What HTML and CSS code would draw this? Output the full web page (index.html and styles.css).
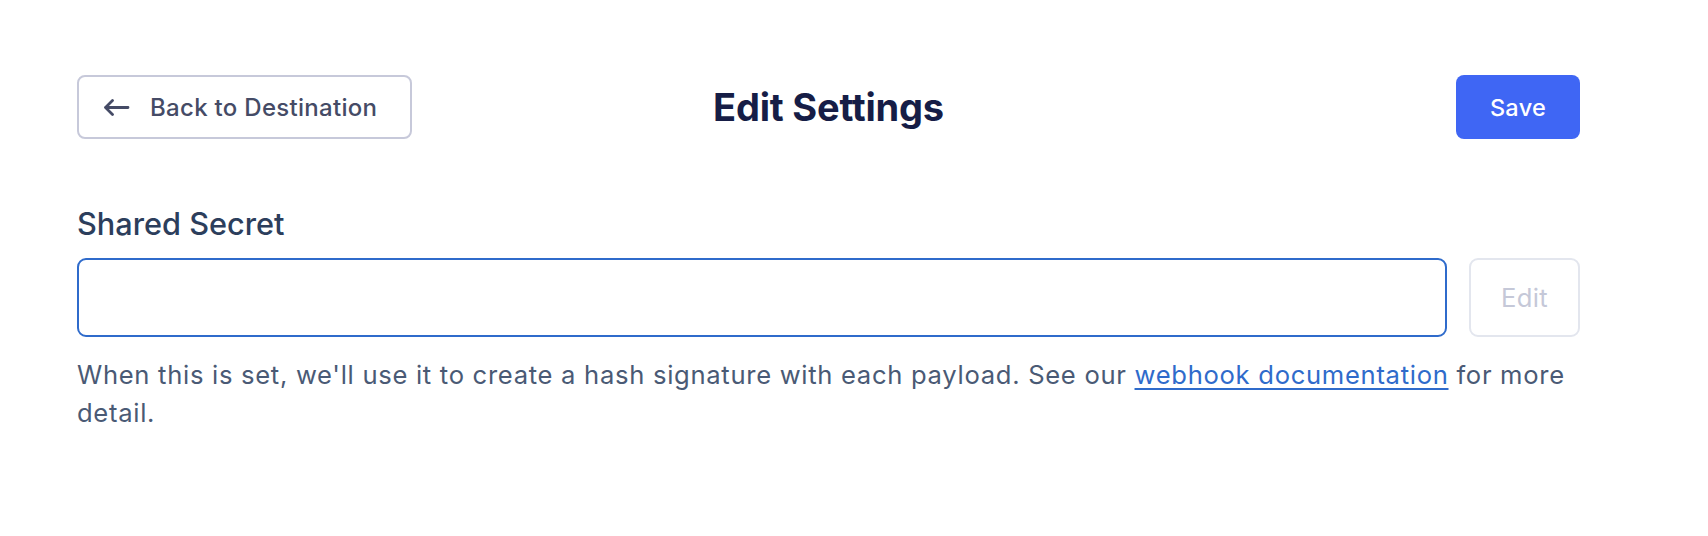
FILE: index.html
```html
<!DOCTYPE html>
<html lang="en">
<head>
<meta charset="utf-8">
<title>Edit Settings</title>
<link rel="stylesheet" href="styles.css">
</head>
<body>
<main class="page">
  <header class="topbar">
    <div class="topbar-left">
      <button class="btn btn-outline" type="button">
        <svg class="arrow" width="27" height="17" viewBox="0 0 27 17" fill="none" stroke="currentColor" stroke-width="2.8" stroke-linecap="round" stroke-linejoin="round">
          <path d="M2.5 8.5H25M9.5 1.5L2.5 8.5L9.5 15.5"/>
        </svg>
        <span>Back to Destination</span>
      </button>
    </div>
    <h1 class="title">Edit Settings</h1>
    <div class="topbar-right">
      <button class="btn btn-primary" type="button">Save</button>
    </div>
  </header>

  <section class="field">
    <label class="field-label" for="secret">Shared Secret</label>
    <div class="field-row">
      <input class="field-input" id="secret" type="text">
      <button class="btn btn-disabled" type="button">Edit</button>
    </div>
    <p class="field-help">When this is set, we'll use it to create a hash signature with each payload. See our <a href="#">webhook documentation</a> for more detail.</p>
  </section>
</main>
</body>
</html>
```

FILE: styles.css
```css
* { box-sizing: border-box; }

html, body {
  margin: 0;
  padding: 0;
  background: #ffffff;
}

body {
  font-family: Inter, "Noto Sans", "Liberation Sans", sans-serif;
  color: #4a5a75;
}

.page {
  padding: 75px 128px 0 77px;
}

.topbar {
  display: grid;
  grid-template-columns: 1fr auto 1fr;
  align-items: center;
  height: 64px;
}

.topbar-left { display: flex; justify-content: flex-start; }
.topbar-right { display: flex; justify-content: flex-end; }

.title {
  margin: 0;
  font-size: 38px;
  font-weight: 700;
  color: #161d46;
  letter-spacing: -0.2px;
}

.btn {
  font-family: inherit;
  border-radius: 8px;
  cursor: pointer;
  display: inline-flex;
  align-items: center;
  justify-content: center;
  height: 64px;
}

.btn-outline {
  background: #fff;
  border: 2px solid #c7c9da;
  color: #454b66;
  padding: 0 33px 0 24px;
  gap: 20px;
  font-size: 24px;
  letter-spacing: 0.3px;
  font-weight: 500;
}

.arrow { display: block; }

.btn-primary {
  background: #3f66f4;
  border: none;
  color: #fff;
  width: 124px;
  font-size: 23.5px;
  letter-spacing: 0.3px;
  font-weight: 500;
}

.field { margin-top: 65px; }

.field-label {
  display: block;
  font-size: 30.7px;
  font-weight: 500;
  color: #2c3e5c;
  line-height: 40px;
}

.field-row {
  display: flex;
  gap: 22px;
  margin-top: 14px;
}

.field-input {
  flex: 1;
  height: 79px;
  border: 2px solid #2f6bcb;
  border-radius: 9px;
  outline: none;
  font-family: inherit;
  font-size: 25.6px;
  padding: 0 20px;
}

.btn-disabled {
  width: 111px;
  height: 79px;
  background: #fff;
  border: 2px solid #e3e6ee;
  color: #c5c8d8;
  font-size: 25.6px;
  letter-spacing: 0.4px;
  font-weight: 400;
  border-radius: 9px;
}

.field-help {
  margin: 19px 0 0;
  font-size: 25.6px;
  line-height: 38.4px;
  letter-spacing: 0.7px;
  color: #4a5a75;
}

.field-help a {
  color: #2f6bcb;
  text-decoration: underline;
  text-underline-offset: 4px;
  text-decoration-thickness: 2px;
}
```
